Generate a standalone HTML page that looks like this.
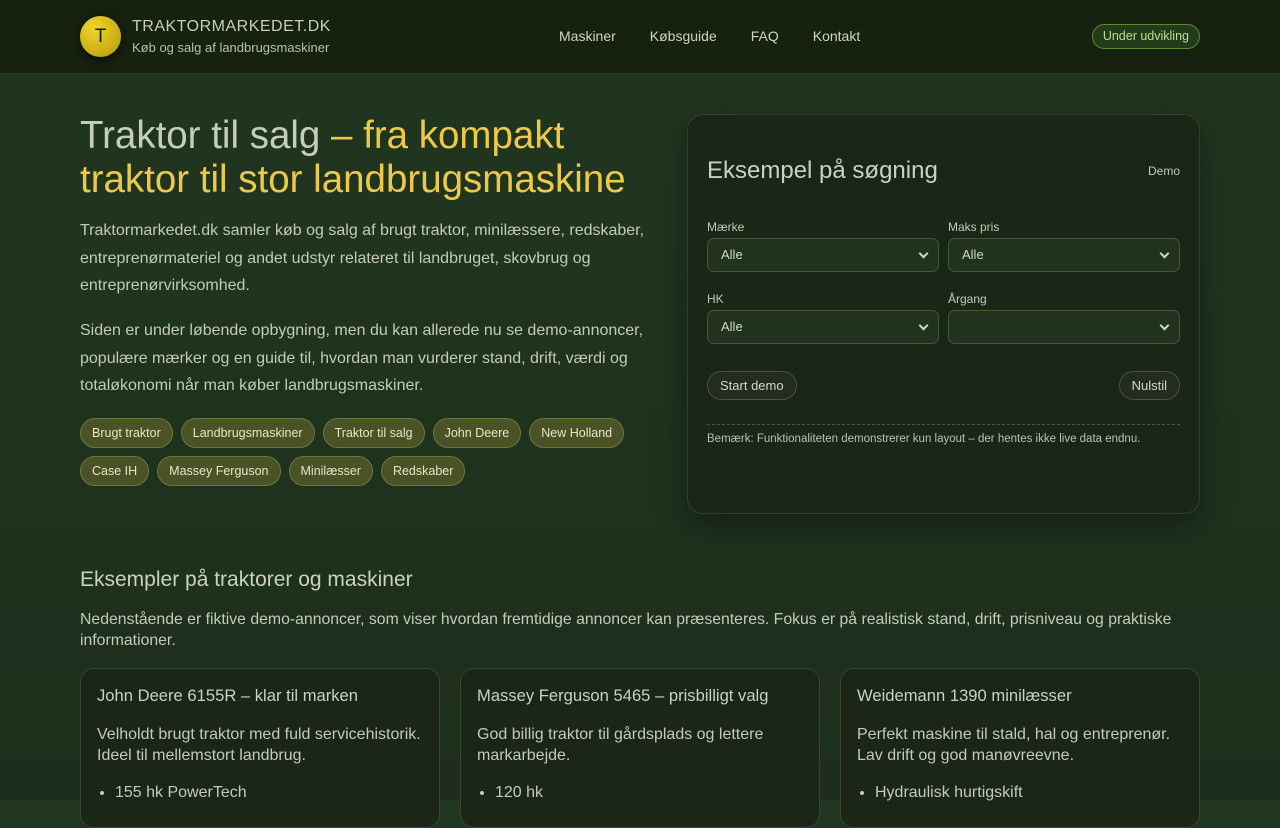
<!DOCTYPE html>
<html><head><meta charset="utf-8"><style>
*{box-sizing:border-box;margin:0;padding:0}
html,body{width:1280px;height:800px;overflow:hidden}
body{background:linear-gradient(180deg,#213620 0%,#1d2f1c 100%);font-family:"Liberation Sans",sans-serif;color:#d4dcc8}
header{height:74px;background:#16210f;border-bottom:1px solid #2a3b24;position:relative}
.logo{position:absolute;left:80px;top:16px;width:41px;height:41px;border-radius:50%;background:radial-gradient(circle at 35% 30%,#f1d52a,#c7ab14 70%,#9a8510);box-shadow:0 3px 10px rgba(0,0,0,.6);color:#1a1a0a;font-size:19px;text-align:center;line-height:41px}
.brand{position:absolute;left:132px;top:18px;font-size:16px;letter-spacing:.5px;color:#c6cebb}
.sub{position:absolute;left:132px;top:40px;font-size:13px;color:#b7c0a8}
nav{position:absolute;top:28px;left:559px;font-size:14px;color:#cdd5c0}
nav span{margin-right:34px}
.badge{position:absolute;right:80px;top:24px;height:25px;padding:0 10px;border:1px solid #5a8a34;border-radius:13px;background:#233a1b;color:#b7e08a;font-size:12.5px;line-height:23px}
h1{position:absolute;left:80px;top:114px;font-weight:400;font-size:38.5px;line-height:44px;color:#c5cfb8;white-space:nowrap}
h1 em{font-style:normal;color:#ecc94a}
.p{position:absolute;left:80px;width:580px;font-size:16px;line-height:27.5px;color:#c3cbb6}
.tags{position:absolute;left:80px;top:418px;width:580px}
.tag{display:inline-block;height:30px;padding:0 11px;margin:0 8px 8px 0;border:1px solid #6b7a3c;border-radius:15px;background:#4a5226;color:#e3e6c8;font-size:12.5px;line-height:28px}
.panel{position:absolute;left:687px;top:114px;width:513px;height:400px;border:1px solid #2f4228;border-radius:16px;background:#1a2617;box-shadow:0 10px 30px rgba(0,0,0,.35)}
.panel h2{position:absolute;left:19px;top:42px;font-weight:400;font-size:24px;color:#c9d2bd}
.demo{position:absolute;right:19px;top:49px;font-size:12px;color:#c3cbb6}
.lbl{position:absolute;font-size:12px;color:#c3cbb6}
.sel{position:absolute;width:232px;height:34px;border:1px solid #3f5a35;border-radius:7px;background:#22331d;color:#d1d9c4;font-size:13px;line-height:32px;padding-left:13px}
.sel:after{content:"";position:absolute;right:11px;top:11px;width:5px;height:5px;border-right:2px solid #d1d9c4;border-bottom:2px solid #d1d9c4;transform:rotate(45deg)}
.btn{position:absolute;top:256px;height:29px;border:1px solid #46533e;border-radius:15px;background:#232c1f;color:#d1d9c4;font-size:13px;line-height:27px;padding:0 12px}
.hr{position:absolute;left:19px;right:19px;top:309px;border-top:1px dashed #4a5a40}
.note{position:absolute;left:19px;top:318px;font-size:11.5px;color:#b9c2ad}
h3{position:absolute;left:80px;top:568px;font-weight:400;font-size:21px;color:#c9d2bd}
.intro{position:absolute;left:80px;top:609px;width:1120px;font-size:15.8px;line-height:21px;color:#c3cbb6}
.card{position:absolute;top:668px;width:360px;height:160px;border:1px solid #34452c;border-radius:14px;background:#1b2618;padding:17px 16px}
.card h4{font-weight:400;font-size:16.6px;color:#c9d2bd;margin-bottom:18px}
.card p{font-size:16px;line-height:21px;color:#c3cbb6;margin-bottom:18px}
.card li{font-size:16px;margin-left:18px;color:#c3cbb6}
</style></head><body>
<header>
<div class="logo">T</div>
<div class="brand">TRAKTORMARKEDET.DK</div>
<div class="sub">Køb og salg af landbrugsmaskiner</div>
<nav><span>Maskiner</span><span>Købsguide</span><span>FAQ</span><span>Kontakt</span></nav>
<div class="badge">Under udvikling</div>
</header>
<h1>Traktor til salg <em>– fra kompakt<br>traktor til stor landbrugsmaskine</em></h1>
<div class="p" style="top:217px">Traktormarkedet.dk samler køb og salg af brugt traktor, minilæssere, redskaber, entreprenørmateriel og andet udstyr relateret til landbruget, skovbrug og entreprenørvirksomhed.</div>
<div class="p" style="top:317px">Siden er under løbende opbygning, men du kan allerede nu se demo-annoncer, populære mærker og en guide til, hvordan man vurderer stand, drift, værdi og totaløkonomi når man køber landbrugsmaskiner.</div>
<div class="tags"><span class="tag">Brugt traktor</span><span class="tag">Landbrugsmaskiner</span><span class="tag">Traktor til salg</span><span class="tag">John Deere</span><span class="tag">New Holland</span><br><span class="tag">Case IH</span><span class="tag">Massey Ferguson</span><span class="tag">Minilæsser</span><span class="tag">Redskaber</span></div>
<div class="panel">
<h2>Eksempel på søgning</h2><div class="demo">Demo</div>
<div class="lbl" style="left:19px;top:105px">Mærke</div><div class="lbl" style="left:260px;top:105px">Maks pris</div>
<div class="sel" style="left:19px;top:123px">Alle</div><div class="sel" style="left:260px;top:123px">Alle</div>
<div class="lbl" style="left:19px;top:177px">HK</div><div class="lbl" style="left:260px;top:177px">Årgang</div>
<div class="sel" style="left:19px;top:195px">Alle</div><div class="sel" style="left:260px;top:195px"></div>
<div class="btn" style="left:19px">Start demo</div><div class="btn" style="right:19px">Nulstil</div>
<div class="hr"></div>
<div class="note">Bemærk: Funktionaliteten demonstrerer kun layout – der hentes ikke live data endnu.</div>
</div>
<h3>Eksempler på traktorer og maskiner</h3>
<div class="intro">Nedenstående er fiktive demo-annoncer, som viser hvordan fremtidige annoncer kan præsenteres. Fokus er på realistisk stand, drift, prisniveau og praktiske informationer.</div>
<div class="card" style="left:80px"><h4>John Deere 6155R – klar til marken</h4><p>Velholdt brugt traktor med fuld servicehistorik. Ideel til mellemstort landbrug.</p><ul><li>155 hk PowerTech</li></ul></div>
<div class="card" style="left:460px"><h4>Massey Ferguson 5465 – prisbilligt valg</h4><p>God billig traktor til gårdsplads og lettere markarbejde.</p><ul><li>120 hk</li></ul></div>
<div class="card" style="left:840px"><h4>Weidemann 1390 minilæsser</h4><p>Perfekt maskine til stald, hal og entreprenør. Lav drift og god manøvreevne.</p><ul><li>Hydraulisk hurtigskift</li></ul></div>
</body></html>
